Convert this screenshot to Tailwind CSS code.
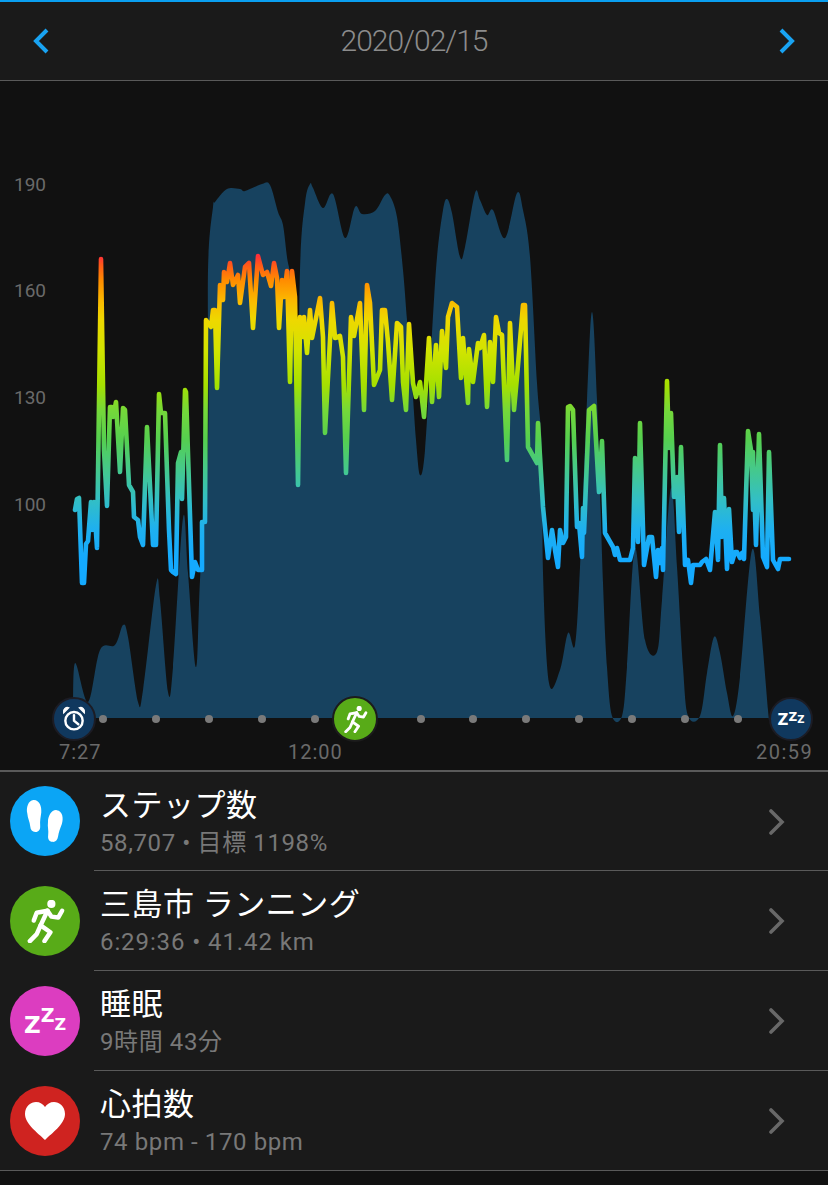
<!doctype html>
<html lang="ja">
<head>
<meta charset="utf-8">
<script src="https://cdn.jsdelivr.net/npm/@tailwindcss/browser@4"></script>
</head>
<body class="bg-[#111111]">
<div class="w-[828px] h-[1185px] overflow-hidden bg-[#111111] font-['Roboto','Noto_Sans_CJK_JP',sans-serif]">
  <div class="h-[2px] bg-[#0a9ff0]"></div>
  <header class="h-[79px] bg-[#1a1a1a] border-b border-[#5a5a5a] flex items-center justify-between px-[32px]">
    <svg width="18" height="26" viewBox="0 0 18 26" fill="none" stroke="#19a3f2" stroke-width="4"><path d="M15 2 L4 13 L15 24"/></svg>
    <span class="text-[30px] tracking-[-1px] font-light text-[#8c8c8c] leading-none mb-[1px]">2020/02/15</span>
    <svg width="18" height="26" viewBox="0 0 18 26" fill="none" stroke="#19a3f2" stroke-width="4"><path d="M3 2 L14 13 L3 24"/></svg>
  </header>

  <section class="relative h-[689px] bg-[#111111]">
    <svg class="block" width="828" height="689" viewBox="0 81 828 689" fill="none">
      <defs>
        <linearGradient id="hr" gradientUnits="userSpaceOnUse" x1="0" y1="560" x2="0" y2="256">
          <stop offset="0" stop-color="#14aaff"/>
          <stop offset="0.1" stop-color="#1eb0f0"/>
          <stop offset="0.2" stop-color="#33bfc4"/>
          <stop offset="0.3" stop-color="#45c98a"/>
          <stop offset="0.395" stop-color="#55cf50"/>
          <stop offset="0.49" stop-color="#74d83a"/>
          <stop offset="0.576" stop-color="#a5e000"/>
          <stop offset="0.69" stop-color="#d2e400"/>
          <stop offset="0.79" stop-color="#eed800"/>
          <stop offset="0.855" stop-color="#fbb800"/>
          <stop offset="0.92" stop-color="#ff8c00"/>
          <stop offset="0.97" stop-color="#ff5a18"/>
          <stop offset="1" stop-color="#ff2f3a"/>
        </linearGradient>
      </defs>
      <path id="area" fill="#17425f" d="M73,718 L75,663 L88,702 L100,650 L115,645 L123,625 L128,637 L138,702 L143,690 L156,585 L160,600 L168,692 L173,667 L183,518 L188,573 L196,667 L200,580 L208,440 L208,270 L213,207 L215,202 L227,189 L240,189 L245,191 L262,184 L270,185 L278,212 L283,225 L287,257 L293,303 L297,470 L300,270 L305,203 L310,184 L313,188 L323,208 L333,194 L345,238 L355,207 L362,214 L375,211 L385,195 L390,196 L397,217 L403,270 L407,320 L412,383 L416,440 L420,475 L425,450 L432,333 L437,257 L443,210 L447,199 L452,213 L460,257 L465,247 L475,193 L480,200 L487,215 L493,210 L505,238 L517,193 L523,210 L530,257 L537,383 L542,450 L543,573 L549,683 L560,670 L568,633 L575,645 L580,567 L587,400 L592,312 L597,400 L603,583 L607,667 L612,716 L622,716 L627,667 L635,548 L645,640 L657,652 L662,600 L671,488 L677,567 L683,667 L688,716 L700,716 L707,673 L714,637 L720,653 L727,693 L733,716 L740,677 L752,550 L760,617 L768,710 L769,718 Z"/>
      <polyline class="blur-[0.4px]" stroke="url(#hr)" stroke-width="4.6" stroke-linejoin="round" stroke-linecap="round" points="75,510 77,499 79,498 82,583 84,583 86,544 88,541 91,502 92,530 94,502 97,548 101,259 104,450 107,506 110,407 112,407 113,417 116,402 120,472 123,408 125,410 129,485 133,492 134,517 138,520 140,537 143,545 147,427 153,545 156,545 159,394 161,413 165,413 169,530 171,570 173,572 176,574 178,463 181,452 182,499 185,390 186,392 192,577 195,562 198,570 202,570 202,522 205,522 206,320 211,327 213,310 215,310 217,388 220,285 223,300 224,272 227,282 230,263 233,285 238,275 240,303 245,267 249,263 253,328 258,256 263,275 267,272 271,286 274,263 277,278 279,328 282,280 284,297 287,271 290,382 292,271 295,297 298,485 300,317 303,337 304,317 307,353 310,310 312,338 320,298 323,337 325,433 332,303 335,338 340,336 343,357 346,473 351,317 354,336 360,303 364,410 367,285 370,303 374,385 380,370 382,310 385,310 388,342 392,400 397,323 401,327 403,382 406,410 409,324 413,383 416,397 420,382 424,417 429,338 432,402 436,345 439,397 442,331 446,368 448,317 452,303 457,307 461,378 463,338 468,403 469,349 473,382 478,343 480,348 484,335 487,407 490,342 493,382 496,317 499,333 502,335 507,460 510,323 514,410 517,377 523,305 525,305 528,447 537,463 538,423 540,457 543,507 548,558 552,530 555,550 558,567 560,530 563,543 566,537 568,407 570,406 573,410 577,527 579,523 582,557 583,508 584,533 589,410 594,406 599,492 602,441 605,533 613,547 615,555 617,548 620,560 630,560 633,548 635,458 638,542 640,423 644,565 649,537 652,537 656,577 658,550 660,563 662,548 663,570 667,381 669,448 671,413 674,497 677,477 679,532 681,447 685,565 688,560 691,583 693,565 700,565 702,562 706,559 710,570 715,512 718,560 720,445 722,537 724,498 727,569 729,509 732,562 735,552 737,552 740,558 742,553 744,559 748,431 751,450 753,510 753,452 756,545 759,434 763,557 767,567 769,452 773,560 778,569 780,559 789,559"/>
      <g fill="#7a7a7a">
        <circle cx="103" cy="719" r="4"/><circle cx="156" cy="719" r="4"/><circle cx="209" cy="719" r="4"/><circle cx="262" cy="719" r="4"/><circle cx="315" cy="719" r="4"/><circle cx="421" cy="719" r="4"/><circle cx="473" cy="719" r="4"/><circle cx="526" cy="719" r="4"/><circle cx="579" cy="719" r="4"/><circle cx="632" cy="719" r="4"/><circle cx="685" cy="719" r="4"/><circle cx="738" cy="719" r="4"/>
      </g>
    </svg>

    <!-- axis labels over the chart -->
    <span class="absolute left-[14px] top-[94px] text-[19px] leading-[20px] text-[#6a6a6a]">190</span>
    <span class="absolute left-[14px] top-[200px] text-[19px] leading-[20px] text-[#6a6a6a]">160</span>
    <span class="absolute left-[14px] top-[307px] text-[19px] leading-[20px] text-[#6a6a6a]">130</span>
    <span class="absolute left-[14px] top-[414px] text-[19px] leading-[20px] text-[#6a6a6a]">100</span>
    <span class="absolute left-[59px] top-[660px] text-[20px] leading-[22px] tracking-[1px] text-[#6a6a6a]">7:27</span>
    <span class="absolute left-[288px] top-[660px] text-[20px] leading-[22px] tracking-[1px] text-[#6a6a6a]">12:00</span>
    <span class="absolute left-[756px] top-[660px] text-[20px] leading-[22px] tracking-[1.5px] text-[#6a6a6a]">20:59</span>

    <!-- timeline markers -->
    <div class="absolute left-[52px] top-[616px] w-[44px] h-[44px] rounded-full bg-[#10385e] border-[2px] border-[#1c1c24] flex items-center justify-center">
      <svg width="26" height="28" viewBox="0 0 30 32" fill="none" stroke="#ffffff" stroke-width="2.8" stroke-linecap="round">
        <circle cx="15" cy="18" r="10"/>
        <path d="M15 11.5 V18 L20 22"/>
        <path d="M3 9 C2 4 6 2 9 3 Z" fill="#ffffff" stroke-width="1.4"/>
        <path d="M27 9 C28 4 24 2 21 3 Z" fill="#ffffff" stroke-width="1.4"/>
      </svg>
    </div>
    <div class="absolute left-[332px] top-[615px] w-[46px] h-[46px] rounded-full bg-[#58ab18] border-[2px] border-[#1c1c1c] flex items-center justify-center">
      <svg width="27" height="27" viewBox="-22 -22 44 44" fill="none" stroke="#ffffff" stroke-width="4.6" stroke-linecap="round" stroke-linejoin="round">
        <circle cx="6" cy="-18" r="4.2" fill="#ffffff" stroke="none"/>
        <path d="M2 -11 L-5 4 L5 11 L-1 20"/>
        <path d="M-5 4 L-9 13 L-16 20"/>
        <path d="M2 -11 L-9 -9 L-12 -1"/>
        <path d="M2 -11 L6 -5 L13 -4 L17 -11"/>
      </svg>
    </div>
    <div class="absolute left-[769px] top-[616px] w-[44px] h-[44px] rounded-full bg-[#10385e] border-[2px] border-[#1c1c24] flex items-start justify-center font-['DejaVu_Sans',sans-serif] font-bold text-white leading-none">
      <span class="text-[15px] mt-[14px]">Z</span><span class="text-[12px] mt-[12px]">Z</span><span class="text-[10px] mt-[16px]">Z</span>
    </div>
  </section>

  <ul class="bg-[#1a1a1a] border-t-[2px] border-[#5a5a5a]">
    <li class="h-[99px] flex items-center pl-[10px] relative">
      <div class="w-[70px] h-[70px] mb-[1px] rounded-full bg-[#0ba5f5] shrink-0 flex items-center justify-center">
        <svg width="70" height="70" viewBox="0 0 70 70" fill="#ffffff"><path transform="translate(24.5,30) rotate(-4)" d="M0 -16 C6 -16 8 -9 7 -3 C6 2 5 5 5 10 C5 14 3 16 0 16 C-3 16 -5 14 -5 10 C-5 5 -7 2 -7 -3 C-8 -9 -5 -16 0 -16Z"/><path transform="translate(44.5,40) rotate(8)" d="M0 -16 C6 -16 8 -9 7 -3 C6 2 5 5 5 10 C5 14 3 16 0 16 C-3 16 -5 14 -5 10 C-5 5 -7 2 -7 -3 C-8 -9 -5 -16 0 -16Z"/></svg>
      </div>
      <div class="ml-[20px] flex-1 flex flex-col">
        <span class="text-[31px] tracking-[0.5px] leading-[42px] text-white">ステップ数</span>
        <span class="text-[24px] tracking-[0.6px] leading-[32px] text-[#787878]">58,707 • 目標 1198%</span>
      </div>
      <svg class="mr-[43px]" width="16" height="26" viewBox="0 0 16 26" fill="none" stroke="#686868" stroke-width="3.6" stroke-linecap="round"><path d="M2 2 L13 13 L2 24"/></svg>
      <div class="absolute left-[94px] right-0 bottom-0 h-px bg-[#5a5a5a]"></div>
    </li>
    <li class="h-[100px] flex items-center pl-[10px] relative">
      <div class="w-[70px] h-[70px] rounded-full bg-[#58ab18] shrink-0 flex items-center justify-center">
        <svg width="43" height="43" viewBox="-22 -22 44 44" fill="none" stroke="#ffffff" stroke-width="4.6" stroke-linecap="round" stroke-linejoin="round">
          <circle cx="6" cy="-18" r="4.2" fill="#ffffff" stroke="none"/>
          <path d="M2 -11 L-5 4 L5 11 L-1 20"/>
          <path d="M-5 4 L-9 13 L-16 20"/>
          <path d="M2 -11 L-9 -9 L-12 -1"/>
          <path d="M2 -11 L6 -5 L13 -4 L17 -11"/>
        </svg>
      </div>
      <div class="ml-[20px] flex-1 flex flex-col">
        <span class="text-[31px] tracking-[0.5px] leading-[42px] text-white">三島市 ランニング</span>
        <span class="text-[24px] tracking-[0.9px] leading-[32px] text-[#787878]">6:29:36 • 41.42 km</span>
      </div>
      <svg class="mr-[43px]" width="16" height="26" viewBox="0 0 16 26" fill="none" stroke="#686868" stroke-width="3.6" stroke-linecap="round"><path d="M2 2 L13 13 L2 24"/></svg>
      <div class="absolute left-[94px] right-0 bottom-0 h-px bg-[#5a5a5a]"></div>
    </li>
    <li class="h-[100px] flex items-center pl-[10px] relative">
      <div class="w-[70px] h-[70px] rounded-full bg-[#dc3dc0] shrink-0 flex items-start justify-center font-['DejaVu_Sans',sans-serif] font-bold text-white leading-none">
        <span class="text-[23px] mt-[28px]">Z</span><span class="text-[19px] mt-[20px]">Z</span><span class="text-[16px] mt-[31px]">Z</span>
      </div>
      <div class="ml-[20px] flex-1 flex flex-col">
        <span class="text-[31px] tracking-[0.5px] leading-[42px] text-white">睡眠</span>
        <span class="text-[24px] tracking-[0.6px] leading-[32px] text-[#787878]">9時間 43分</span>
      </div>
      <svg class="mr-[43px]" width="16" height="26" viewBox="0 0 16 26" fill="none" stroke="#686868" stroke-width="3.6" stroke-linecap="round"><path d="M2 2 L13 13 L2 24"/></svg>
      <div class="absolute left-[94px] right-0 bottom-0 h-px bg-[#5a5a5a]"></div>
    </li>
    <li class="h-[100px] flex items-center pl-[10px] relative">
      <div class="w-[70px] h-[70px] rounded-full bg-[#cf2320] shrink-0 flex items-center justify-center">
        <svg width="70" height="70" viewBox="0 0 70 70" fill="#ffffff"><path d="M35 54 C28 47 15 38 15 28 C15 20 21 16 26 16 C30 16 33 18 35 21 C37 18 40 16 44 16 C49 16 55 20 55 28 C55 38 42 47 35 54Z"/></svg>
      </div>
      <div class="ml-[20px] flex-1 flex flex-col">
        <span class="text-[31px] tracking-[0.5px] leading-[42px] text-white">心拍数</span>
        <span class="text-[24px] tracking-[0.6px] leading-[32px] text-[#787878]">74 bpm - 170 bpm</span>
      </div>
      <svg class="mr-[43px]" width="16" height="26" viewBox="0 0 16 26" fill="none" stroke="#686868" stroke-width="3.6" stroke-linecap="round"><path d="M2 2 L13 13 L2 24"/></svg>
      <div class="absolute left-0 right-0 bottom-0 h-px bg-[#5a5a5a]"></div>
    </li>
  </ul>
</div>
<script>
  // Smooth the activity area's hand-read outline into a Catmull-Rom curve.
  (function () {
    var el = document.getElementById('area');
    var p = el.getAttribute('d').match(/[\d.]+,[\d.]+/g).map(function (s) { return s.split(',').map(Number); });
    var d = 'M' + p[0];
    for (var i = 0; i < p.length - 1; i++) {
      var a = p[i - 1] || p[i], b = p[i], c = p[i + 1], e = p[i + 2] || c;
      d += ' C' + (b[0] + (c[0] - a[0]) / 6) + ',' + (b[1] + (c[1] - a[1]) / 6) + ' ' +
           (c[0] - (e[0] - b[0]) / 6) + ',' + (c[1] - (e[1] - b[1]) / 6) + ' ' + c[0] + ',' + c[1];
    }
    el.setAttribute('d', d + ' Z');
  })();
</script>
</body>
</html>
